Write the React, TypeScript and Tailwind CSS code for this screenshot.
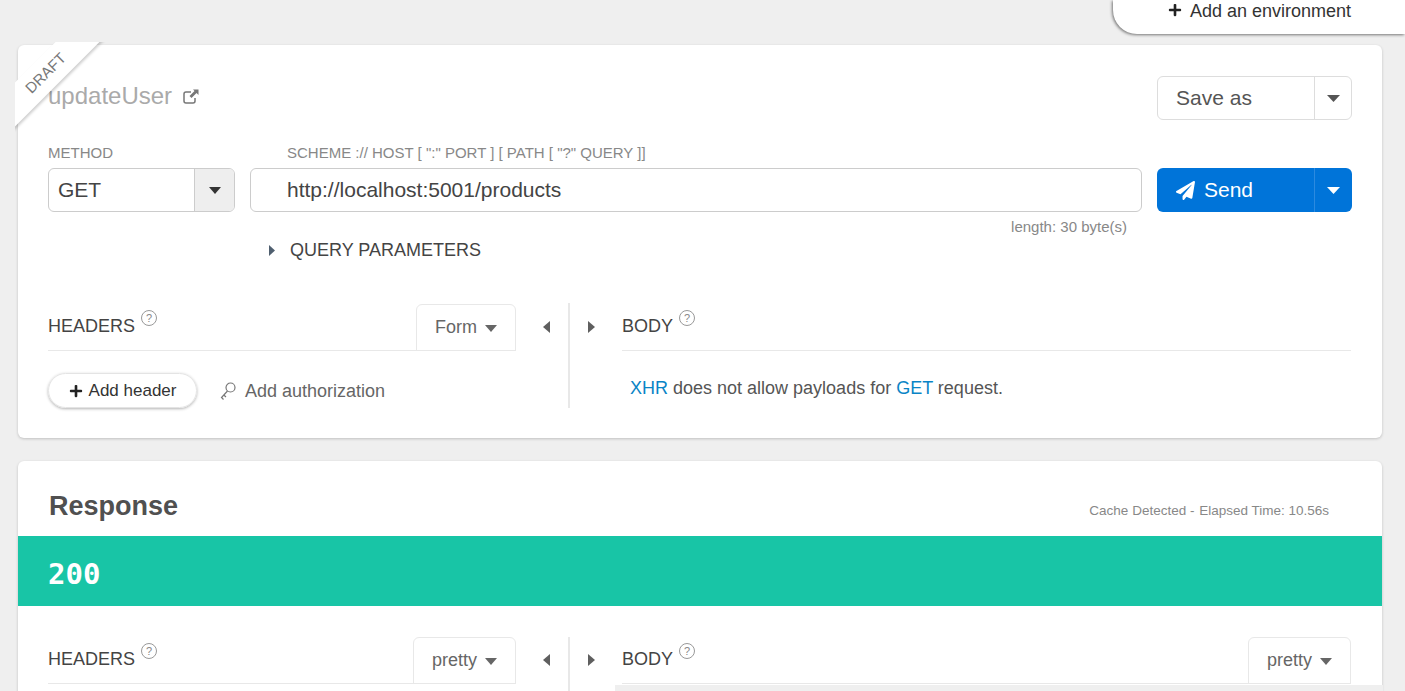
import { FaPaperPlane, FaPlus } from "react-icons/fa"

function CaretDown({ color = "#555", wide }: { color?: string; wide?: boolean }) {
  return (
    <svg width={wide ? 13 : 12} height="7" viewBox="0 0 12 7" preserveAspectRatio="none">
      <path d="M0 0h12L6 7z" fill={color} />
    </svg>
  )
}

function Help() {
  return (
    <span className="ml-[6px] mt-[-16px] flex h-[16px] w-[16px] items-center justify-center rounded-full border border-[#999] text-[11px] leading-none text-[#888]">
      ?
    </span>
  )
}

function Arrows() {
  return (
    <div className="flex h-[47px] w-[106px] shrink-0 items-center justify-between px-[27px] pb-[2px]">
      <svg width="7" height="12" viewBox="0 0 7 12">
        <path d="M7 0v12L0 6z" fill="#5f5f5f" />
      </svg>
      <svg width="7" height="12" viewBox="0 0 7 12">
        <path d="M0 0v12l7-6z" fill="#5f5f5f" />
      </svg>
    </div>
  )
}

function PaneHead({ title, tab, tabWidth }: { title: string; tab?: string; tabWidth?: string }) {
  return (
    <div className="flex h-[47px] items-end justify-between border-b border-[#e8e8e8]">
      <div className="flex h-[46px] items-center pb-[2px] text-[18px] text-[#444]">
        {title}
        <Help />
      </div>
      {tab && (
        <div
          className={`mb-[-1px] flex h-[47px] items-center justify-center gap-[8px] rounded-t-[6px] border border-[#e8e8e8] text-[18px] text-[#666] ${tabWidth}`}
        >
          {tab}
          <span className="mt-[2px] flex">
            <CaretDown color="#666" />
          </span>
        </div>
      )}
    </div>
  )
}

export default function App() {
  return (
    <div className="h-[691px] w-[1405px] overflow-hidden bg-[#efefef] font-['Liberation_Sans',Arial,sans-serif]">
      <div className="flex h-[45px] justify-end">
        <div className="flex h-[34px] w-[292px] items-start gap-[8px] rounded-bl-[24px] bg-white pl-[55px] pt-[1px] text-[18px] leading-[20px] text-[#333] shadow-[-1px_1px_3px_rgba(0,0,0,0.5)]">
          <FaPlus size={14} className="mt-[2px] text-[#222]" />
          Add an environment
        </div>
      </div>

      <div className="ml-[18px] mr-[23px] flex flex-col gap-[23px]">
        {/* request */}
        <section className="relative h-[393px] rounded-[6px] bg-white px-[30px] shadow-[0_1px_3px_rgba(0,0,0,0.2)]">
          <div className="absolute left-[-3px] top-[-3px] h-[92px] w-[92px] overflow-hidden">
            <div className="absolute left-[-39px] top-[16px] flex h-[31px] w-[140px] -rotate-45 items-center justify-center bg-white text-[15px] text-[#777] shadow-[0_2px_3px_rgba(0,0,0,0.2)]">
              DRAFT
            </div>
          </div>

          <div className="flex items-start justify-between pt-[31px]">
            <div className="flex items-center gap-[11px] pt-[5px] text-[24px] leading-[30px] text-[#aaa]">
              updateUser
              <svg width="16" height="15" viewBox="0 0 16 15" fill="none">
                <path d="M8 3H3a2 2 0 0 0-2 2v7a2 2 0 0 0 2 2h7a2 2 0 0 0 2-2V9" stroke="#777" strokeWidth="1.5" />
                <path d="M10 0.500h5.500V6L13.500 4 8.500 9 6.500 7l5-5z" fill="#777" />
              </svg>
            </div>
            <div className="flex h-[44px] w-[195px] rounded-[6px] border border-[#ddd] text-[21px] text-[#555]">
              <div className="flex w-[157px] items-center border-r border-[#ddd] pl-[18px]">Save as</div>
              <div className="flex flex-1 items-center justify-center">
                <CaretDown wide />
              </div>
            </div>
          </div>

          <div className="mt-[24px] flex gap-[15px]">
            <div className="w-[187px] shrink-0">
              <div className="h-[16px] pt-[1px] text-[15px] leading-[16px] text-[#888]">METHOD</div>
              <div className="mt-[8px] flex h-[44px] overflow-hidden rounded-[6px] border border-[#ccc] text-[21px] text-[#444]">
                <div className="flex w-[145px] items-center pl-[9px]">GET</div>
                <div className="flex flex-1 items-center justify-center border-l border-[#ccc] bg-[#eee]">
                  <CaretDown color="#333" />
                </div>
              </div>
            </div>
            <div className="w-[892px] shrink-0">
              <div className="h-[16px] pl-[37px] pt-[1px] text-[15px] leading-[16px] text-[#888]">
                SCHEME :// HOST [ ":" PORT ] [ PATH [ "?" QUERY ]]
              </div>
              <div className="mt-[8px] flex h-[44px] items-center rounded-[6px] border border-[#ccc] pl-[36px] text-[21px] text-[#444]">
                http://localhost:5001/products
              </div>
              <div className="mt-[7px] pr-[15px] text-right text-[15px] leading-[16px] text-[#888]">
                length: 30 byte(s)
              </div>
            </div>
            <div className="pt-[24px]">
              <div className="flex h-[44px] w-[195px] rounded-[6px] bg-[#0074d9] text-[21px] text-white">
                <div className="flex w-[158px] items-center gap-[9px] border-r border-[#2b8ae0] pl-[19px]">
                  <FaPaperPlane size={19} />
                  Send
                </div>
                <div className="flex flex-1 items-center justify-center">
                  <CaretDown color="#fff" wide />
                </div>
              </div>
            </div>
          </div>

          <div className="mt-[5px] flex items-center gap-[15px] pl-[221px] text-[18px] leading-[20px] text-[#444]">
            <svg width="6" height="11" viewBox="0 0 6 11">
              <path d="M0 0v11l6-5.500z" fill="#4f5f6f" />
            </svg>
            QUERY PARAMETERS
          </div>

          <div className="mt-[44px] flex">
            <div className="w-[468px] shrink-0">
              <PaneHead title="HEADERS" tab="Form" tabWidth="w-[100px]" />
              <div className="mt-[22px] flex items-center gap-[23px]">
                <div className="flex h-[35px] w-[149px] items-center justify-center gap-[6px] rounded-full border border-[#e4e4e4] pt-[1px] text-[17px] text-[#333] shadow-[0_1px_3px_rgba(0,0,0,0.3)]">
                  <FaPlus size={14} className="text-[#222]" />
                  Add header
                </div>
                <div className="flex items-center gap-[9px] pt-[1px] text-[18px] text-[#666]">
                  <svg width="16" height="18" viewBox="0 0 16 18" fill="none" stroke="#777" strokeWidth="1.2">
                    <circle cx="10.500" cy="5.500" r="4.500" />
                    <path d="M7.500 9 1.500 15.500 3.500 17.500M3.800 13 6 15" />
                  </svg>
                  Add authorization
                </div>
              </div>
            </div>
            <div className="relative">
              <Arrows />
              <div className="absolute left-[52px] top-[-1px] h-[105px] w-[2px] bg-[#e8e8e8]" />
            </div>
            <div className="mr-[1px] flex-1">
              <PaneHead title="BODY" />
              <div className="mt-[25px] pl-[8px] text-[18px] leading-[24px] text-[#555]">
                <span className="text-[#0a84c6]">XHR</span> does not allow payloads for{" "}
                <span className="text-[#0a84c6]">GET</span> request.
              </div>
            </div>
          </div>
        </section>

        {/* response */}
        <section className="h-[240px] rounded-t-[6px] bg-white shadow-[0_1px_3px_rgba(0,0,0,0.2)]">
          <div className="flex h-[75px] items-end justify-between pb-[12px] pl-[31px] pr-[53px]">
            <div className="text-[27px] font-bold leading-[36px] text-[#505050]">Response</div>
            <div className="pb-[5px] text-[13.500px] leading-[16px] text-[#888]">
              Cache Detected - <span className="ml-[1px]">Elapsed Time: 10.56s</span>
            </div>
          </div>
          <div className="flex h-[70px] items-center bg-[#18c5a6] pl-[30px] pt-[7px] font-['DejaVu_Sans_Mono',monospace] text-[29px] font-bold text-white">
            200
          </div>
          <div className="flex px-[30px] pt-[31px]">
            <div className="w-[468px] shrink-0">
              <PaneHead title="HEADERS" tab="pretty" tabWidth="w-[103px]" />
            </div>
            <div className="relative">
              <Arrows />
              <div className="absolute left-[52px] top-0 h-[60px] w-[2px] bg-[#e8e8e8]" />
            </div>
            <div className="mr-[1px] flex-1">
              <PaneHead title="BODY" tab="pretty" tabWidth="w-[103px]" />
              <div className="ml-[-7px] mr-[-32px] mt-[1px] h-[10px] bg-[#efefef]" />
            </div>
          </div>
        </section>
      </div>
    </div>
  )
}
